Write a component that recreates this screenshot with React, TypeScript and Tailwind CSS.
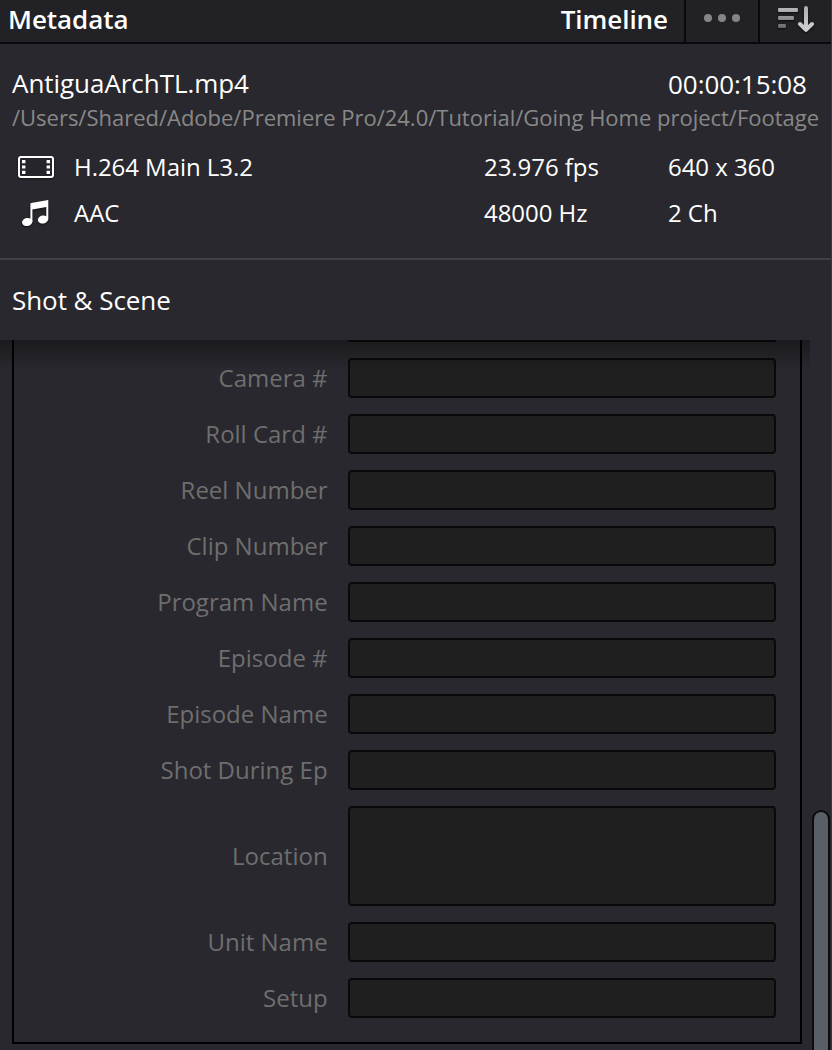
const fields: { label: string; tall?: boolean }[] = [
  { label: 'Camera #' },
  { label: 'Roll Card #' },
  { label: 'Reel Number' },
  { label: 'Clip Number' },
  { label: 'Program Name' },
  { label: 'Episode #' },
  { label: 'Episode Name' },
  { label: 'Shot During Ep' },
  { label: 'Location', tall: true },
  { label: 'Unit Name' },
  { label: 'Setup' },
];

function SortIcon() {
  return (
    <svg width="44" height="36" viewBox="0 0 44 36" fill="none" strokeLinecap="round" className="drop-shadow-[0_1px_1px_rgba(0,0,0,0.7)]">
      <defs>
        <linearGradient id="bars" x1="0" y1="8" x2="0" y2="28" gradientUnits="userSpaceOnUse">
          <stop stopColor="#b8b8ba" />
          <stop offset="1" stopColor="#68686a" />
        </linearGradient>
        <linearGradient id="arrow" x1="0" y1="6" x2="0" y2="32" gradientUnits="userSpaceOnUse">
          <stop stopColor="#adadad" />
          <stop offset="1" stopColor="#d2d2d2" />
        </linearGradient>
      </defs>
      <g fill="url(#bars)">
        <rect x="4" y="8" width="20" height="4" rx="1.2" />
        <rect x="4" y="16" width="16" height="4" rx="1.2" />
        <rect x="4" y="24" width="8" height="4" rx="1.2" />
      </g>
      <path d="M32 8V29M26 24L32 29.8L38 24" stroke="url(#arrow)" strokeWidth="4" strokeLinejoin="round" />
    </svg>
  );
}

function FilmIcon() {
  return (
    <svg width="36" height="22" viewBox="0 0 36 22" className="drop-shadow-[0_1px_1px_rgba(0,0,0,0.5)]">
      <rect x="1" y="1" width="34" height="20" rx="2" fill="#26252b" stroke="#fff" strokeWidth="2" />
      <path d="M4 4h3.4v3.2H4zM4 9.4h3.4v3.2H4zM4 14.8h3.4V18H4zM28.6 4H32v3.2h-3.4zM28.6 9.4H32v3.2h-3.4zM28.6 14.8H32V18h-3.4z" fill="#fff" />
    </svg>
  );
}

function MusicIcon() {
  return (
    <svg width="27" height="27" viewBox="0 0 27 27" fill="#fff" className="drop-shadow-[0_1px_1px_rgba(0,0,0,0.6)]">
      <path d="M8.4 4Q8.4 3.2 9.2 3L26.3 0v19.5h-2V7L10.4 9.6V22h-2z" />
      <ellipse cx="5.2" cy="22" rx="5.2" ry="4" transform="rotate(-12 5.2 22)" />
      <ellipse cx="21" cy="19.5" rx="5.2" ry="4" transform="rotate(-12 21 19.5)" />
    </svg>
  );
}

export default function App() {
  return (
    <div className="relative flex h-[1050px] w-[832px] flex-col overflow-hidden whitespace-nowrap bg-[#29282e] font-['Open_Sans',sans-serif] text-white">
      <header className="flex h-11 shrink-0 border-b-2 border-[#09090b] bg-[#222126] text-[26px] leading-[38px] font-semibold">
        <h1 className="pl-2 tracking-[-0.05px]">Metadata</h1>
        <div className="ml-auto pr-4 tracking-[-0.05px]">Timeline</div>
        <button className="flex w-[74px] items-start justify-center gap-[6px] border-l-2 border-[#09090b] pt-[14px]" aria-label="Options">
          <span className="size-2 rounded-full bg-[#858585]" />
          <span className="size-2 rounded-full bg-[#858585]" />
          <span className="size-2 rounded-full bg-[#858585]" />
        </button>
        <button className="flex w-[74px] items-start border-l-2 border-[#09090b] pl-[14px]" aria-label="Sort">
          <SortIcon />
        </button>
      </header>

      <section className="h-[216px] shrink-0 border-b-2 border-[#3f4348] pt-[22px]">
        <div className="flex h-[35px] pl-3 text-[26px] tracking-[-0.05px]">
          <div className="w-[656px] leading-[34px]">AntiguaArchTL.mp4</div>
          <div className="leading-9">00:00:15:08</div>
        </div>
        <div className="h-8 pl-3 text-[22px] leading-8 tracking-[-0.01px] text-[#888888]">
          /Users/Shared/Adobe/Premiere Pro/24.0/Tutorial/Going Home project/Footage
        </div>
        <div className="mt-[11px] flex h-[46px] items-center text-[24px] tracking-[-0.05px]">
          <div className="flex w-[74px] pl-[18px]"><FilmIcon /></div>
          <div className="w-[410px]">H.264 Main L3.2</div>
          <div className="w-[184px]">23.976 fps</div>
          <div>640 x 360</div>
        </div>
        <div className="flex h-[46px] items-center text-[24px] tracking-[-0.05px]">
          <div className="flex w-[74px] pl-[22px]"><MusicIcon /></div>
          <div className="w-[410px]">AAC</div>
          <div className="w-[184px]">48000 Hz</div>
          <div>2 Ch</div>
        </div>
      </section>

      <h2 className="h-20 shrink-0 pl-3 text-[26px] leading-[80px] tracking-[-0.05px]">Shot &amp; Scene</h2>

      <div className="relative flex min-h-0 grow">
        <div className="ml-3 flex h-[704px] w-[790px] flex-col gap-4 border-2 border-t-0 border-black">
          <div className="ml-[334px] h-[2px] w-[428px] shrink-0 rounded-b-sm bg-[#0b0b0c]" />
          {fields.map((f) => (
            <label key={f.label} className="flex items-center">
              <span className="w-[314px] pr-[0.4px] text-right text-[24px] leading-[40px] text-[#6e6e6e]">{f.label}</span>
              <span className={`ml-5 w-[428px] rounded-[4px] border-2 border-[#09090a] bg-[#1f1f1f] ${f.tall ? 'h-[100px]' : 'h-10'}`} />
            </label>
          ))}
        </div>
        <div className="absolute top-0 left-0 h-[30px] w-[810px] bg-linear-to-b from-black/35 to-transparent" />
        <div className="mt-[470px] ml-[10px] w-[18px] rounded-t-[9px] border-2 border-b-0 border-[#0c0c0e] bg-[#5a5e66]" />
      </div>
      <div className="absolute top-0 right-0 h-full w-px bg-[#38383e]" />
    </div>
  );
}
